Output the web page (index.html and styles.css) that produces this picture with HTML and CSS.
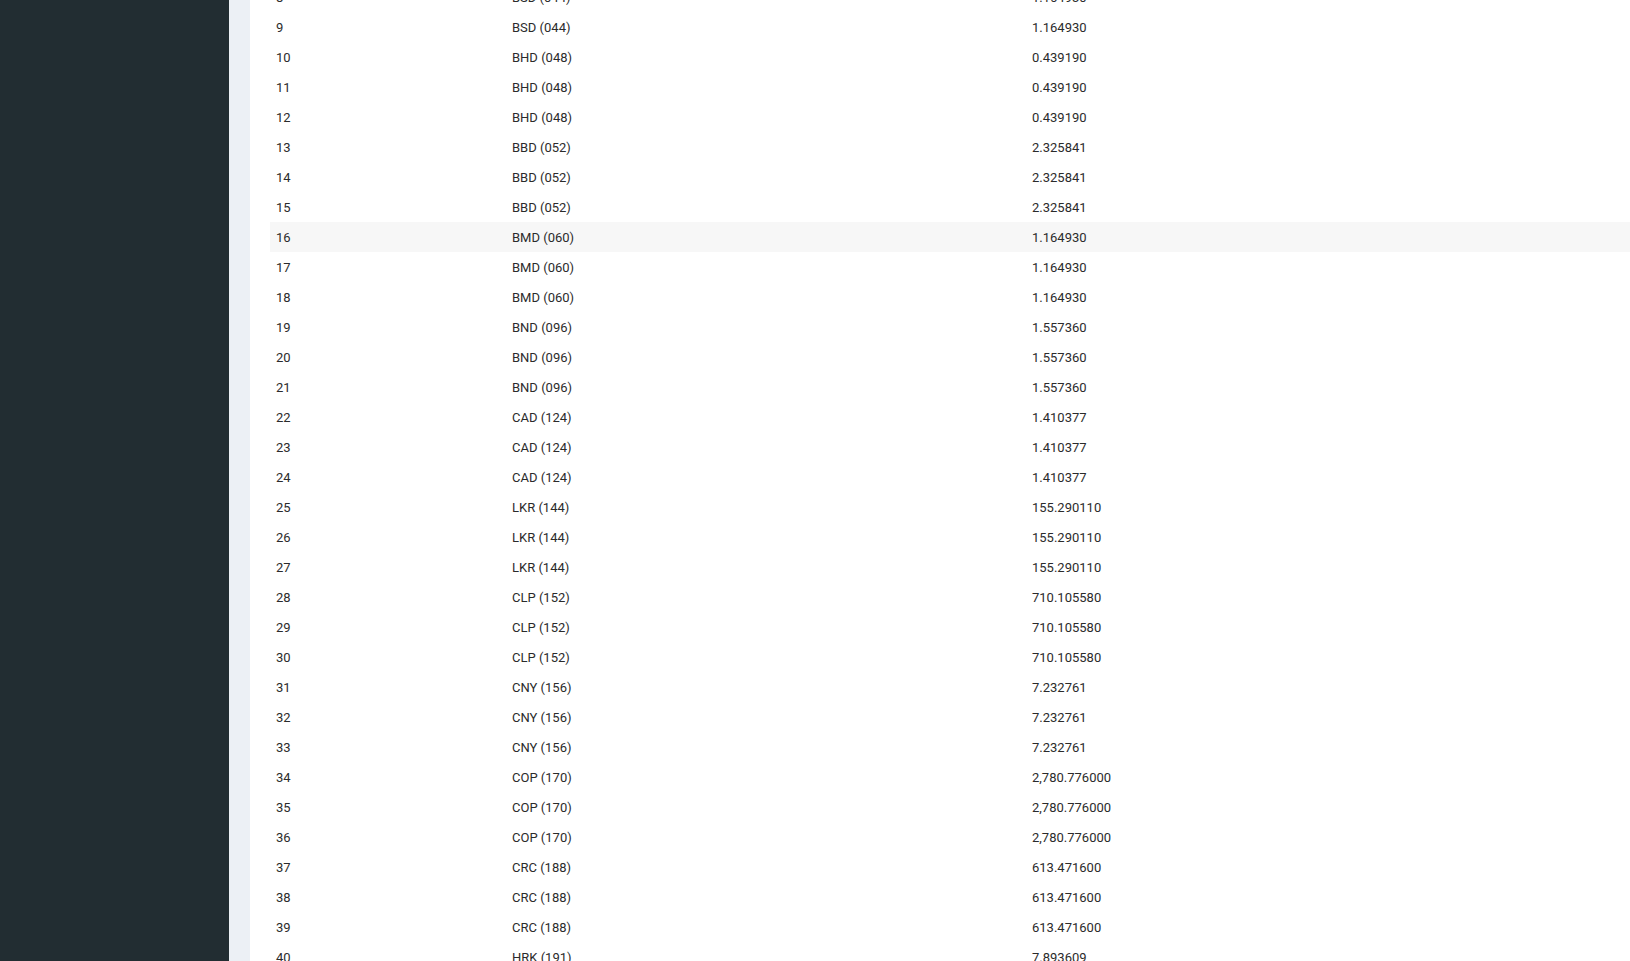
FILE: index.html
```html
<!DOCTYPE html>
<html>
<head>
<meta charset="utf-8">
<link rel="stylesheet" href="styles.css">
</head>
<body>
<div class="layout">
  <aside class="sidebar"></aside>
  <main class="content">
    <section class="box">
      <table class="rates">
        <colgroup><col class="c1"><col class="c2"><col class="c3"></colgroup>
        <tbody>
          <tr><td>8</td><td>BSD (044)</td><td>1.164930</td></tr>
          <tr><td>9</td><td>BSD (044)</td><td>1.164930</td></tr>
          <tr><td>10</td><td>BHD (048)</td><td>0.439190</td></tr>
          <tr><td>11</td><td>BHD (048)</td><td>0.439190</td></tr>
          <tr><td>12</td><td>BHD (048)</td><td>0.439190</td></tr>
          <tr><td>13</td><td>BBD (052)</td><td>2.325841</td></tr>
          <tr><td>14</td><td>BBD (052)</td><td>2.325841</td></tr>
          <tr><td>15</td><td>BBD (052)</td><td>2.325841</td></tr>
          <tr class="hover"><td>16</td><td>BMD (060)</td><td>1.164930</td></tr>
          <tr><td>17</td><td>BMD (060)</td><td>1.164930</td></tr>
          <tr><td>18</td><td>BMD (060)</td><td>1.164930</td></tr>
          <tr><td>19</td><td>BND (096)</td><td>1.557360</td></tr>
          <tr><td>20</td><td>BND (096)</td><td>1.557360</td></tr>
          <tr><td>21</td><td>BND (096)</td><td>1.557360</td></tr>
          <tr><td>22</td><td>CAD (124)</td><td>1.410377</td></tr>
          <tr><td>23</td><td>CAD (124)</td><td>1.410377</td></tr>
          <tr><td>24</td><td>CAD (124)</td><td>1.410377</td></tr>
          <tr><td>25</td><td>LKR (144)</td><td>155.290110</td></tr>
          <tr><td>26</td><td>LKR (144)</td><td>155.290110</td></tr>
          <tr><td>27</td><td>LKR (144)</td><td>155.290110</td></tr>
          <tr><td>28</td><td>CLP (152)</td><td>710.105580</td></tr>
          <tr><td>29</td><td>CLP (152)</td><td>710.105580</td></tr>
          <tr><td>30</td><td>CLP (152)</td><td>710.105580</td></tr>
          <tr><td>31</td><td>CNY (156)</td><td>7.232761</td></tr>
          <tr><td>32</td><td>CNY (156)</td><td>7.232761</td></tr>
          <tr><td>33</td><td>CNY (156)</td><td>7.232761</td></tr>
          <tr><td>34</td><td>COP (170)</td><td>2,780.776000</td></tr>
          <tr><td>35</td><td>COP (170)</td><td>2,780.776000</td></tr>
          <tr><td>36</td><td>COP (170)</td><td>2,780.776000</td></tr>
          <tr><td>37</td><td>CRC (188)</td><td>613.471600</td></tr>
          <tr><td>38</td><td>CRC (188)</td><td>613.471600</td></tr>
          <tr><td>39</td><td>CRC (188)</td><td>613.471600</td></tr>
          <tr><td>40</td><td>HRK (191)</td><td>7.893609</td></tr>
        </tbody>
      </table>
    </section>
  </main>
</div>
</body>
</html>
```
FILE: styles.css
```css
html, body {
  margin: 0;
  padding: 0;
  height: 100%;
  overflow: hidden;
  font-family: Roboto, "Liberation Sans", sans-serif;
  font-size: 13px;
  color: #2b2b2b;
}
.layout {
  display: flex;
  height: 100vh;
  background: #ecf0f5;
}
.sidebar {
  width: 229px;
  flex: 0 0 229px;
  background: #222d32;
}
.content {
  flex: 1;
  padding-left: 21px;
  overflow: hidden;
}
.box {
  background: #fff;
  height: calc(100% + 18px);
  padding-left: 20px;
  margin-top: -18px;
}
.rates {
  border-collapse: collapse;
  width: 1360px;
  table-layout: fixed;
}
.rates .c1 { width: 236px; }
.rates .c2 { width: 520px; }
.rates td {
  height: 30px;
  padding: 0 6px;
  box-sizing: border-box;
  vertical-align: middle;
  white-space: nowrap;
}
.rates tr.hover td {
  background: #f7f7f7;
}
```
